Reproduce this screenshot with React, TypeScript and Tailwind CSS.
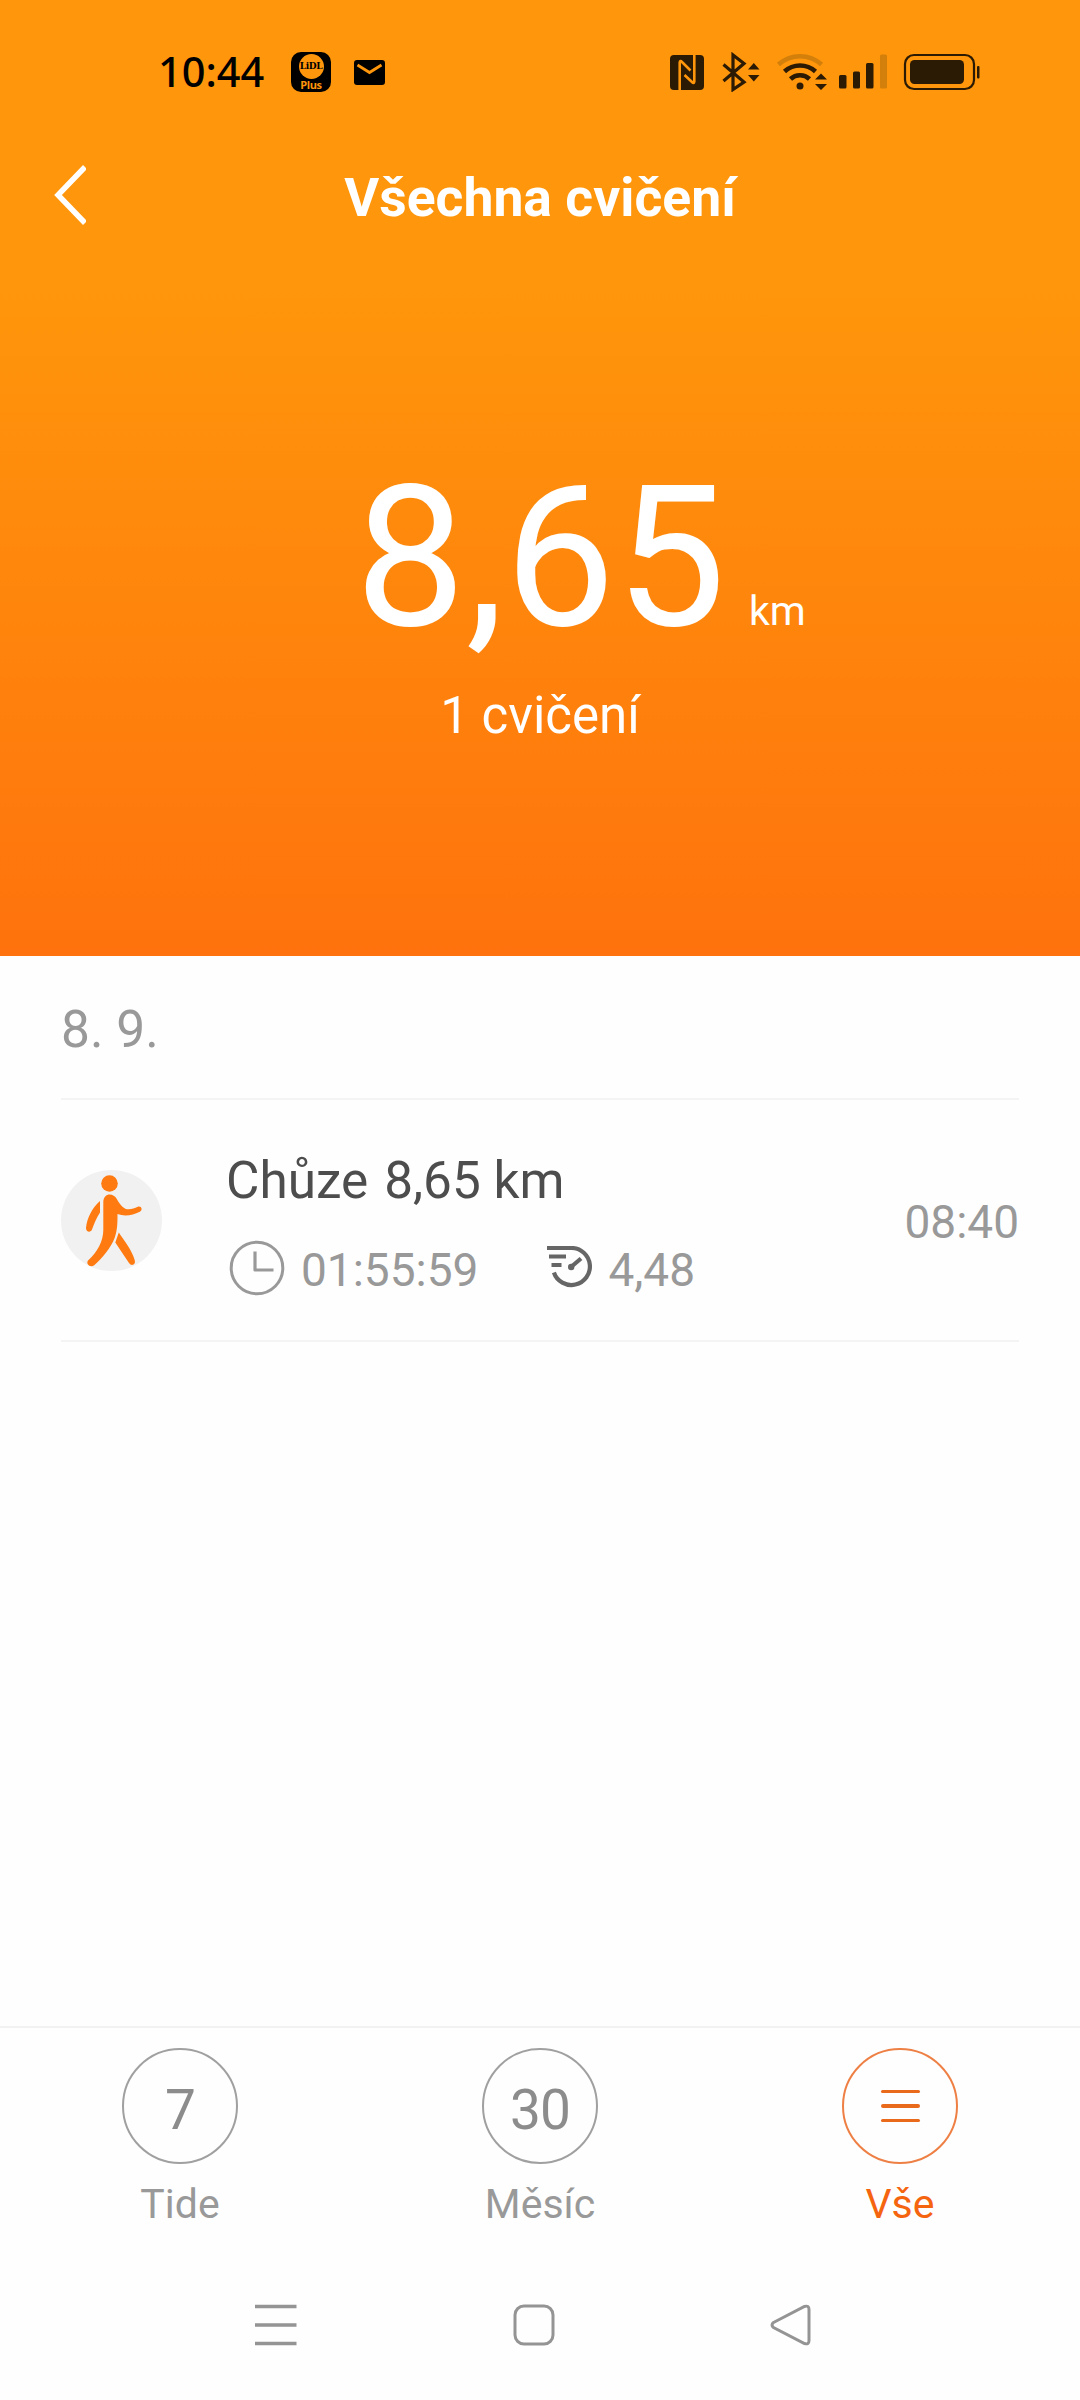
import type { ReactNode } from "react";

const tabs = [
  { label: "Tide", badge: "7" },
  { label: "Měsíc", badge: "30" },
  { label: "Vše", badge: null },
];

const StatusBar = () => {
  return (
    <div className="flex h-36 items-center pl-[158px] pr-[100px]">
      <span className="w-[133px] font-['Noto_Sans',sans-serif] text-[41.5px] leading-none font-medium text-black">10:44</span>
      <div className="flex h-10 w-10 flex-col items-center rounded-[10px] bg-black pt-[2px]">
        <div className="flex h-[25px] w-[25px] shrink-0 items-center justify-center rounded-full bg-[#ff960b]">
          <span className="font-['DejaVu_Serif',serif] text-[9px] leading-none font-bold tracking-[-0.4px] text-black">LiDL</span>
        </div>
        <span className="font-['Open_Sans',sans-serif] text-[11px] leading-[12px] font-bold tracking-[-0.4px] text-[#ff960b]">Plus</span>
      </div>
      <svg className="ml-[23px] h-[25px] w-[31px]" viewBox="0 0 31 25">
        <rect width="31" height="25" rx="3" fill="#000" />
        <path d="M3.5 5 15.5 12.500 27.500 5" fill="none" stroke="#ff960b" strokeWidth="2.800" />
      </svg>
      <svg className="ml-auto h-10 w-[310px]" viewBox="670 52 310 40" fill="#2b1a04">
        <rect x="670" y="55" width="34" height="35" rx="4" />
        <g fill="none" stroke="#ff960b" strokeWidth="2.600">
          <path d="M679.700 90V62.500Q680 60 682 62L690.500 70.500" />
          <path d="M694.300 55v26.500Q694 84 692 82L684.500 75" />
        </g>
        <path d="M723.500 64.500 744 82 733 89.500V55L744 63.500 723.500 81" fill="none" stroke="#2b1a04" strokeWidth="3.200" />
        <path d="M748 69.500h11.500L753.800 63ZM748 75h11.500l-5.700 6.500Z" />
        <path d="M778.500 64.500a32 32 0 0 1 43 0" fill="none" stroke="#d27f0b" strokeWidth="4.600" />
        <path d="M784.500 71.500a23 23 0 0 1 31 0M790.500 79a14 14 0 0 1 19 0" fill="none" stroke="#2b1a04" strokeWidth="4.600" />
        <circle cx="800" cy="86" r="3.500" />
        <path d="M815 79.500h12L821 73.500ZM815 84h12l-6 6Z" />
        <rect x="839" y="75" width="7.500" height="13.500" rx="1.500" />
        <rect x="853" y="71.500" width="7" height="17" rx="1.500" />
        <rect x="866" y="63" width="7.500" height="25.500" rx="1.500" />
        <rect x="880" y="54.500" width="7" height="34" rx="1.500" fill="#d27f0b" />
        <rect x="905" y="55" width="69" height="34" rx="9" fill="none" stroke="#2b1a04" strokeWidth="2.200" />
        <rect x="910" y="60" width="54" height="24" rx="4.500" />
        <rect x="977" y="66" width="2.500" height="12.500" rx="1" />
      </svg>
    </div>
  );
};

const WalkIcon = () => {
  return (
    <svg className="h-[101px] w-[101px]" viewBox="0 0 101 101" fill="#ff7a10">
      <circle cx="50.500" cy="50.500" r="50.500" fill="#f1f1f1" />
      <circle cx="48.500" cy="13.500" r="8.300" />
      <path d="M42.300 32.500c0-10 10-10 13.500-3.500 4 7 7.500 10.500 12 10.300 3 0 6-1.200 9-2.500 3.500-1.200 5.500 3 2 5-7 3.500-15 5-22.300 2.300 0 8.500 0 15.500-2.700 23.500-4 10.500-12.500 20.500-20.300 27.500-4 3.300-9-1-6.500-4.500C36.500 82 42.300 71 42.300 60Z" />
      <path d="M39 31v11.500c-3.500 5.500-5.500 10-8 17-1.200 3.500-6.200 2.500-6-1.500C26 48 31 38 39 31Z" />
      <path d="M57.800 62.500 54.300 72.500 68 93c2.500 3.800 7.500 1.500 5.500-3.500C70.500 79.500 64 72 57.800 62.500Z" />
    </svg>
  );
};

const ClockIcon = () => {
  return (
    <svg className="mr-[16px] h-14 w-14" viewBox="0 0 56 56" fill="none" stroke="#999" strokeWidth="3">
      <circle cx="28" cy="28" r="25.800" />
      <path d="M26 11.500V30h18.500" strokeWidth="3.200" strokeLinejoin="round" />
    </svg>
  );
};

const PaceIcon = () => {
  return (
    <svg className="mr-[15px] mb-[2px] h-[42px] w-[46px]" viewBox="0 0 46 42" fill="none" stroke="#666" strokeWidth="4.200">
      <path d="M0 2h24.500a18.500 18.500 0 1 1-17.600 24.500" />
      <path d="M2 10.500h17M4.500 19h10M24 21 34 12.500" />
      <circle cx="24.200" cy="21" r="3.200" fill="#666" stroke="none" />
    </svg>
  );
};

const Stat = ({ icon, value }: { icon: ReactNode; value: string }) => {
  return (
    <div className="flex items-center">
      {icon}
      <span className="pt-1 text-[46px] leading-[54px] text-[#999]">{value}</span>
    </div>
  );
};

const App = () => {
  return (
    <div className="flex h-[2400px] w-[1080px] flex-col bg-[#fefefe] font-[Roboto,sans-serif]">
      <header className="flex h-[956px] flex-col bg-linear-to-b from-[#ff960b] from-30% to-[#ff720d]">
        <StatusBar />
        <div className="flex h-[104px] items-center justify-between px-[54px]">
          <svg className="mb-[3px] h-[60px] w-8" viewBox="0 0 32 60" fill="none" stroke="#fff" strokeWidth="5.500">
            <path d="M31 2 4 30 31 58" />
          </svg>
          <h1 className="pt-1 text-[53.5px] font-bold text-white">Všechna cvičení</h1>
          <div className="w-8" />
        </div>
        <div className="flex items-baseline pt-[194px] pl-[355px] text-white">
          <span className="text-[197px] leading-[231px]">8,65</span>
          <span className="ml-[23px] text-[41px]">km</span>
        </div>
        <p className="mt-[13px] text-center text-[51px] leading-[60px] text-white">1 cvičení</p>
      </header>

      <main className="flex-1 px-[61px]">
        <div className="flex h-[144px] items-center border-b-2 border-[#f4f4f4] pt-[6px] text-[51.5px] text-[#999]">8. 9.</div>
        <div className="flex h-[242px] items-center border-b-2 border-[#f4f4f4]">
          <WalkIcon />
          <div className="ml-[64px] flex flex-col gap-[28px] pt-[8px]">
            <h2 className="flex gap-[16px] text-[51.3px] leading-[60px] text-[#4d4d4d]">
              <span>Chůze</span>
              <span>8,65 km</span>
            </h2>
            <div className="flex items-center gap-[69px] pl-[3px]">
              <Stat icon={<ClockIcon />} value="01:55:59" />
              <Stat icon={<PaceIcon />} value="4,48" />
            </div>
          </div>
          <span className="ml-auto pt-1 text-[46px] text-[#999]">08:40</span>
        </div>
      </main>

      <nav className="flex h-[216px] border-t-2 border-[#f2f2f2] pt-[20px]">
        {tabs.map(tab => (
          <div key={tab.label} className="flex flex-1 flex-col items-center">
            {tab.badge ? (
              <div className="flex h-[116px] w-[116px] items-center justify-center rounded-full border-2 border-[#a0a0a0] pt-[9px] text-[55px] tracking-[-1px] text-[#8c8c8c]">
                {tab.badge}
              </div>
            ) : (
              <div className="flex h-[116px] w-[116px] flex-col items-center justify-center gap-[11px] rounded-full border-2 border-[#ee8045]">
                <div className="h-[3.5px] w-[39px] rounded-full bg-[#ea6a1c]" />
                <div className="h-[3.5px] w-[39px] rounded-full bg-[#ea6a1c]" />
                <div className="h-[3.5px] w-[39px] rounded-full bg-[#ea6a1c]" />
              </div>
            )}
            <span className={tab.badge ? "mt-4 text-[41px] leading-[48px] text-[#999]" : "mt-4 text-[41px] leading-[48px] text-[#f5640f]"}>
              {tab.label}
            </span>
          </div>
        ))}
      </nav>

      <div className="flex h-[158px] items-center justify-between pt-[8px] pr-[268px] pl-[255px]">
        <svg className="h-[42px] w-[42px]" viewBox="0 0 42 42" stroke="#949494" strokeWidth="3.500">
          <path d="M0 2.500h41.500M0 21h41.500M0 39.500h41.500" />
        </svg>
        <svg className="h-[42px] w-[42px]" viewBox="0 0 42 42" fill="none" stroke="#949494" strokeWidth="3">
          <rect x="2" y="2" width="38" height="38" rx="9" />
        </svg>
        <svg className="h-[42px] w-[42px]" viewBox="0 0 42 42" fill="none" stroke="#949494" strokeWidth="3">
          <path d="M3.500 18.500 34.500 2.500q4.500-1.500 4.500 3v31q0 4.500-4.500 3L3.500 23.500q-3-2.500 0-5Z" />
        </svg>
      </div>
    </div>
  );
};

export default App;
